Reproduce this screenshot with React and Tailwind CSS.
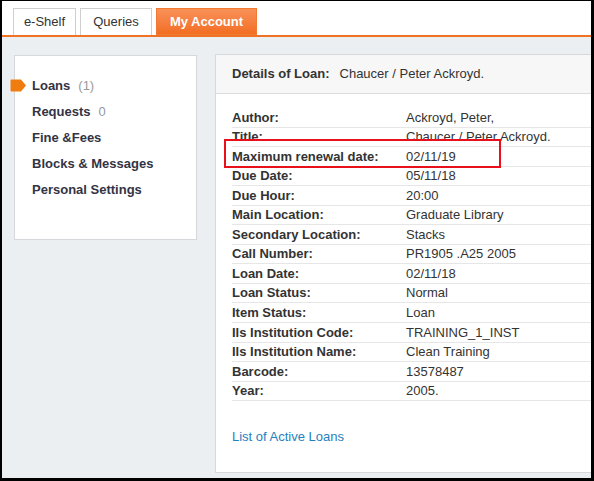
const MENU = [
  { label: 'Loans', count: '(1)', active: true },
  { label: 'Requests', count: '0' },
  { label: 'Fine &Fees' },
  { label: 'Blocks & Messages' },
  { label: 'Personal Settings' },
]

const DETAILS = [
  ['Author:', 'Ackroyd, Peter,'],
  ['Title:', 'Chaucer / Peter Ackroyd.'],
  ['Maximum renewal date:', '02/11/19'],
  ['Due Date:', '05/11/18'],
  ['Due Hour:', '20:00'],
  ['Main Location:', 'Graduate Library'],
  ['Secondary Location:', 'Stacks'],
  ['Call Number:', 'PR1905 .A25 2005'],
  ['Loan Date:', '02/11/18'],
  ['Loan Status:', 'Normal'],
  ['Item Status:', 'Loan'],
  ['Ils Institution Code:', 'TRAINING_1_INST'],
  ['Ils Institution Name:', 'Clean Training'],
  ['Barcode:', '13578487'],
  ['Year:', '2005.'],
]

function Tab({ children, active, width }) {
  if (active) {
    return (
      <div className={`h-[27px] ${width} flex items-center justify-center border border-[#f07a34] bg-gradient-to-b from-[#f89158] to-[#f26d1f] text-white font-bold text-[13px]`}>
        {children}
      </div>
    )
  }
  return (
    <div className={`h-[27px] ${width} flex items-center justify-center border border-b-0 border-[#cfcfcf] bg-white text-[#333] text-[13px]`}>
      {children}
    </div>
  )
}

export default function App() {
  return (
    <div
      className="w-[594px] h-[481px] overflow-hidden border-black border-l-2 border-t border-r-[3px] border-b-[3px] bg-[#eceff2]"
      style={{ fontFamily: '"Liberation Sans", Arial, sans-serif' }}
    >
      {/* Tabs */}
      <div className="h-[34px] bg-white flex items-end gap-[4px] pl-[11px]">
        <Tab width="w-[63px]">e-Shelf</Tab>
        <Tab width="w-[72px]">Queries</Tab>
        <Tab width="w-[101px]" active>My Account</Tab>
      </div>
      <div className="h-[2px] bg-[#f07224]" />

      <div className="relative flex items-start">
        {/* Left menu */}
        <div className="relative ml-[12px] mt-[18px] w-[183px] h-[185px] shrink-0 bg-white border border-[#d6d8db] pt-[17px] pl-[17px]">
          <svg className="absolute left-[-5px] top-[23px]" width="17" height="13" viewBox="0 0 17 13">
            <path d="M1.5 0.5 H11 L16 6.5 L11 12.5 H1.5 Q0.5 12.5 0.5 11.5 V1.5 Q0.5 0.5 1.5 0.5 Z" fill="#f07c0f" />
          </svg>
          {MENU.map(item => (
            <div key={item.label} className="h-[26px] flex items-center text-[13px] font-bold text-[#333344]">
              {item.label}
              {item.count && (
                <span className="ml-[8px] font-normal text-[#999]">{item.count}</span>
              )}
            </div>
          ))}
        </div>

        {/* Loan details */}
        <div className="ml-[18px] mt-[17px] w-[420px] h-[419px] shrink-0 bg-white border border-[#d6d8db]">
          <div className="h-[39px] bg-[#f7f7f7] border-b border-[#dcdcdc] flex items-center pl-[16px] text-[13px] text-[#333]">
            <span className="font-bold">Details of Loan:</span>
            <span className="ml-[10px]">Chaucer / Peter Ackroyd.</span>
          </div>
          <div className="pt-[14px] pl-[16px]">
            {DETAILS.map(([label, value]) => (
              <div key={label} className="h-[19.55px] flex items-center border-b border-[#e6e6e6] text-[13px] text-[#333]">
                <div className="w-[174px] shrink-0 font-bold">{label}</div>
                <div>{value}</div>
              </div>
            ))}
            <div className="mt-[26px] text-[13px] text-[#1f7fc0]">List of Active Loans</div>
          </div>
        </div>

        {/* Highlight box */}
        <div className="absolute left-[222px] top-[102px] w-[277px] h-[29px] border-2 border-[#e8101a]" />
      </div>
    </div>
  )
}
